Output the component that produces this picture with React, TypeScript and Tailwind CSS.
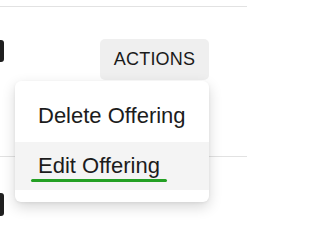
export default function App() {
  return (
    <div className="relative h-[235px] w-[250px] overflow-hidden bg-white font-['Liberation_Sans',Arial,sans-serif] text-[#1c1c1c]">
      <div className="h-[6px]" />
      {/* first table row */}
      <div className="flex h-[150px] w-[247px] items-start border-t-[1.5px] border-[#e2e2e2] pt-[32px]">
        <div className="mt-[1px] h-[22px] w-[4px] rounded-r-[3px] bg-[#1f1f1f]" />
        <button className="ml-[96px] h-[41px] w-[109px] rounded-[5px] bg-[#efefef] text-[18px] leading-[41px] tracking-[0.2px] text-[#1a1a1a]">
          ACTIONS
        </button>
      </div>
      {/* second table row */}
      <div className="w-[247px] border-t-[1.5px] border-[#e2e2e2] pt-[36px]">
        <div className="h-[23px] w-[4px] rounded-r-[3px] bg-[#1f1f1f]" />
      </div>

      {/* dropdown menu */}
      <div className="absolute left-[15px] top-[81px] w-[194px] rounded-[6px] bg-white pb-3 pt-[11px] shadow-[0_5px_14px_rgba(0,0,0,0.16),0_1px_3px_rgba(0,0,0,0.06)]">
        <div className="px-[23px] py-3 text-[22px] leading-6">Delete Offering</div>
        <div className="mt-[2px] bg-[#f4f4f4] px-[23px] pb-[8px] pt-3 text-[22px] leading-6">
          <span className="inline-flex flex-col">
            <span>Edit Offering</span>
            <span className="-mx-[7px] mt-px h-[3px] rounded-full bg-[#24a024]" />
          </span>
        </div>
      </div>
    </div>
  );
}
